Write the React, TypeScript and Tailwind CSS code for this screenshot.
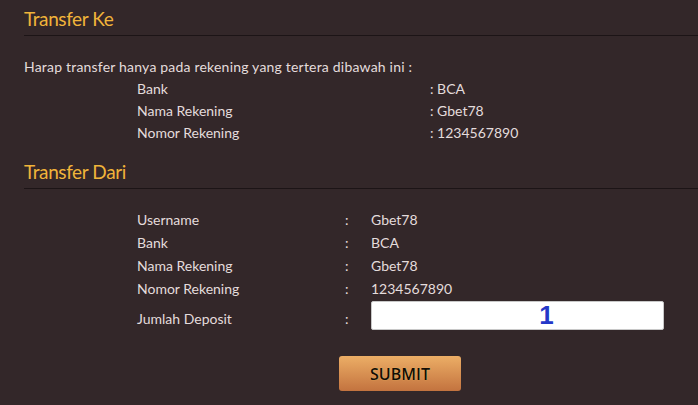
import React from "react";

const fromRows = [
  { label: "Username", value: "Gbet78" },
  { label: "Bank", value: "BCA" },
  { label: "Nama Rekening", value: "Gbet78" },
  { label: "Nomor Rekening", value: "1234567890" },
];

const toRows = [
  { label: "Bank", value: "BCA" },
  { label: "Nama Rekening", value: "Gbet78" },
  { label: "Nomor Rekening", value: "1234567890" },
];

const Heading = ({ children, className = "" }: { children: React.ReactNode; className?: string }) => (
  <div
    className={`h-[36px] pt-[7px] border-b border-[#1c1416] text-[19px] leading-[23px] tracking-[-0.4px] text-[#f1b43a] ${className}`}
  >
    {children}
  </div>
);

export default function App() {
  const [amount, setAmount] = React.useState("1");

  return (
    <div className="min-h-[405px] w-full bg-[#332729] pl-6 font-['Lato',sans-serif] text-[14px] text-[#e4dcdc]">
      {/* Transfer Ke */}
      <Heading>Transfer Ke</Heading>
      <div className="mt-[20px] leading-[22px]">
        <p className="tracking-[0.2px]">Harap transfer hanya pada rekening yang tertera dibawah ini :</p>
        {toRows.map((r) => (
          <div key={r.label} className="flex ml-[113px]">
            <span className="w-[293px]">{r.label}</span>
            <span>: {r.value}</span>
          </div>
        ))}
      </div>

      {/* Transfer Dari */}
      <Heading className="mt-[9px]">Transfer Dari</Heading>
      <div className="mt-[19px] ml-[113px] leading-[23px]">
        {fromRows.map((r) => (
          <div key={r.label} className="flex">
            <span className="w-[208px]">{r.label}</span>
            <span className="w-[26px]">:</span>
            <span>{r.value}</span>
          </div>
        ))}
        <div className="flex items-end mt-[1px]">
          <span className="w-[208px]">Jumlah Deposit</span>
          <span className="w-[26px]">:</span>
          <input
            value={amount}
            onChange={(e) => setAmount(e.target.value)}
            className="h-[29px] w-[293px] rounded-[2px] border border-[#c8c8c8] bg-white pl-[58px] text-center font-['Liberation_Sans',sans-serif] text-[26px] font-bold leading-none text-[#2438c8] outline-none"
          />
        </div>
      </div>

      <button className="mt-[26px] ml-[315px] h-[35px] w-[122px] rounded-[3px] bg-linear-to-b from-[#ecae66] to-[#c3733f] font-['Open_Sans',sans-serif] text-[16px] font-semibold text-[#120c06] [text-shadow:0_0_1px_#f6d36a]">
        SUBMIT
      </button>
    </div>
  );
}
